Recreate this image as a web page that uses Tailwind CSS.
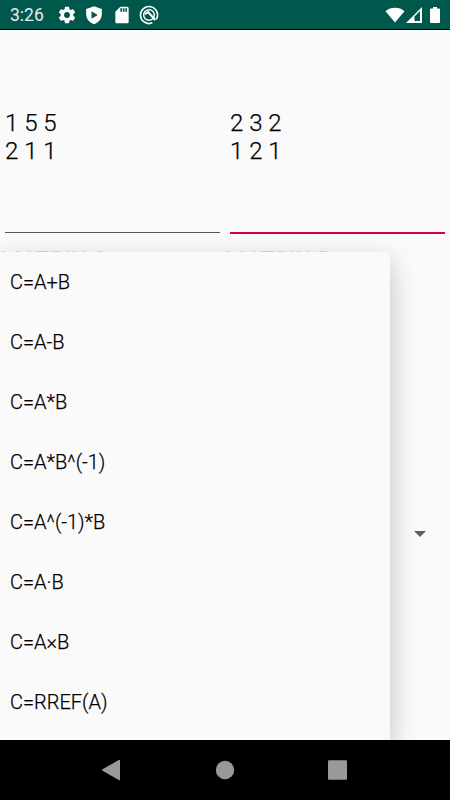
<!DOCTYPE html>
<html lang="en">
<head>
  <meta charset="UTF-8" />
  <meta name="viewport" content="width=device-width, initial-scale=1.0" />
  <title>Matrix Calculator</title>
  <script src="https://cdn.jsdelivr.net/npm/@tailwindcss/browser@4"></script>
</head>
<body class="h-[800px] w-[450px] overflow-hidden bg-[#fafafa] font-['Roboto',sans-serif] font-light text-black flex flex-col">
  <!-- Status bar -->
  <header class="h-[30px] shrink-0 bg-[#00574b] border-b border-black flex items-center pl-2.5 pr-2.5 text-white">
    <span class="text-[17.5px] leading-none w-[47px] pt-[3px] font-normal text-white/90">3:26</span>
    <svg class="size-5" viewBox="0 0 24 24" fill="currentColor"><path d="M19.43 12.98c.04-.32.07-.64.07-.98s-.03-.66-.07-.98l2.11-1.65c.19-.15.24-.42.12-.64l-2-3.46c-.12-.22-.39-.3-.61-.22l-2.49 1c-.52-.4-1.08-.73-1.69-.98l-.38-2.65A.49.49 0 0 0 14 2h-4c-.25 0-.46.18-.49.42l-.38 2.65c-.61.25-1.17.59-1.69.98l-2.49-1c-.23-.09-.49 0-.61.22l-2 3.46c-.13.22-.07.49.12.64l2.11 1.65c-.04.32-.07.65-.07.98s.03.66.07.98l-2.11 1.65c-.19.15-.24.42-.12.64l2 3.46c.12.22.39.3.61.22l2.49-1c.52.4 1.08.73 1.69.98l.38 2.65c.03.24.24.42.49.42h4c.25 0 .46-.18.49-.42l.38-2.65c.61-.25 1.17-.59 1.69-.98l2.49 1c.23.09.49 0 .61-.22l2-3.46c.12-.22.07-.49-.12-.64l-2.11-1.65zM12 15.500a3.500 3.500 0 1 1 0-7 3.500 3.500 0 0 1 0 7z"/></svg>
    <svg class="size-5 ml-[7px]" viewBox="0 0 24 24" fill="currentColor" fill-rule="evenodd"><path d="M12 1.500 2.600 4.800V11.200c0 5.600 4 10.200 9.400 11.800 5.400-1.600 9.400-6.200 9.400-11.800V4.800zM9 7.500l7.500 4.500L9 16.500z"/></svg>
    <svg class="size-5 ml-2" viewBox="0 0 24 24" fill="currentColor" fill-rule="evenodd"><path d="M18 2h-8L4 8v12c0 1.100.9 2 2 2h12c1.100 0 2-.9 2-2V4c0-1.100-.9-2-2-2zm-6 6h-2V4h2zm3 0h-2V4h2zm3 0h-2V4h2z"/></svg>
    <svg class="size-5 ml-[7px]" viewBox="0 0 24 24" fill="none" stroke="currentColor"><path d="M16 21.400a10.200 10.200 0 1 1 4.800-4.200" stroke-width="2"/><circle cx="12" cy="12" r="6.400" stroke-width="1.800"/><path d="M7 11l4-2.500 8.500 9.500" stroke-width="2.600"/></svg>
    <svg class="h-4 w-5 ml-auto" viewBox="0 0 20 16" fill="currentColor"><path d="M.5 4.200C5.500-.4 14.500-.4 19.500 4.200L10 15.500z"/></svg>
    <svg class="h-4 w-4 ml-px" viewBox="0 0 16 16"><path d="M0 16 16 0v16z" fill="white"/><path d="M8.500 14V9.500L14 4v10z" fill="#00574b"/></svg>
    <svg class="h-4 w-2.5 ml-2" viewBox="0 0 10 16" fill="currentColor"><path d="M3 0h4v1.500h2q1 0 1 1V15q0 1-1 1H1q-1 0-1-1V2.500q0-1 1-1h2z"/></svg>
  </header>

  <main class="relative grow overflow-hidden">
    <!-- Matrix inputs -->
    <div class="grid grid-cols-2 text-2xl leading-7 pt-[79px] [-webkit-text-stroke:0.25px_black]">
      <div class="px-[5px]">
        <div class="h-[124px] border-b border-[#555]">1 5 5<br>2 1 1</div>
      </div>
      <div class="px-[5px]">
        <div class="h-[125px] border-b-2 border-[#d50045]">2 3 2<br>1 2 1</div>
      </div>
    </div>
    <!-- Only the letter tops show above the dropdown -->
    <div class="grid grid-cols-2 text-2xl leading-7 mt-3 font-normal text-black/15">
      <div>MATRIX C</div>
      <div>MATRIX D</div>
    </div>

    <!-- Spinner arrow -->
    <svg class="absolute left-[414px] top-[501px] h-1.5 w-3" viewBox="0 0 12 6" fill="#606060"><path d="M0 0h12L6 6z"/></svg>

    <!-- Operation dropdown -->
    <ul class="absolute left-0 top-[222px] w-[390px] h-[488px] rounded-t-sm bg-[#fafafa] text-xl shadow-[0_10px_28px_rgba(0,0,0,0.24)] [-webkit-text-stroke:0.25px_black]">
      <li class="h-[60px] px-2.5 flex items-center">C=A+B</li>
      <li class="h-[60px] px-2.5 flex items-center">C=A-B</li>
      <li class="h-[60px] px-2.5 flex items-center">C=A*B</li>
      <li class="h-[60px] px-2.5 flex items-center">C=A*B^(-1)</li>
      <li class="h-[60px] px-2.5 flex items-center">C=A^(-1)*B</li>
      <li class="h-[60px] px-2.5 flex items-center">C=A·B</li>
      <li class="h-[60px] px-2.5 flex items-center">C=A×B</li>
      <li class="h-[60px] px-2.5 flex items-center">C=RREF(A)</li>
    </ul>
  </main>

  <!-- Navigation bar -->
  <nav class="h-[60px] shrink-0 bg-black text-[#999]">
    <svg class="h-[60px] w-full" viewBox="0 0 450 60" fill="currentColor"><path d="M102.500 29.300 118.800 20q1.200-.6 1.200.6v18.800q0 1.200-1.200.6L102.500 30.700q-1-.7 0-1.400z"/><circle cx="225" cy="30" r="9.200"/><rect x="328" y="20.300" width="19" height="19.400" rx="1"/></svg>
  </nav>
</body>
</html>
